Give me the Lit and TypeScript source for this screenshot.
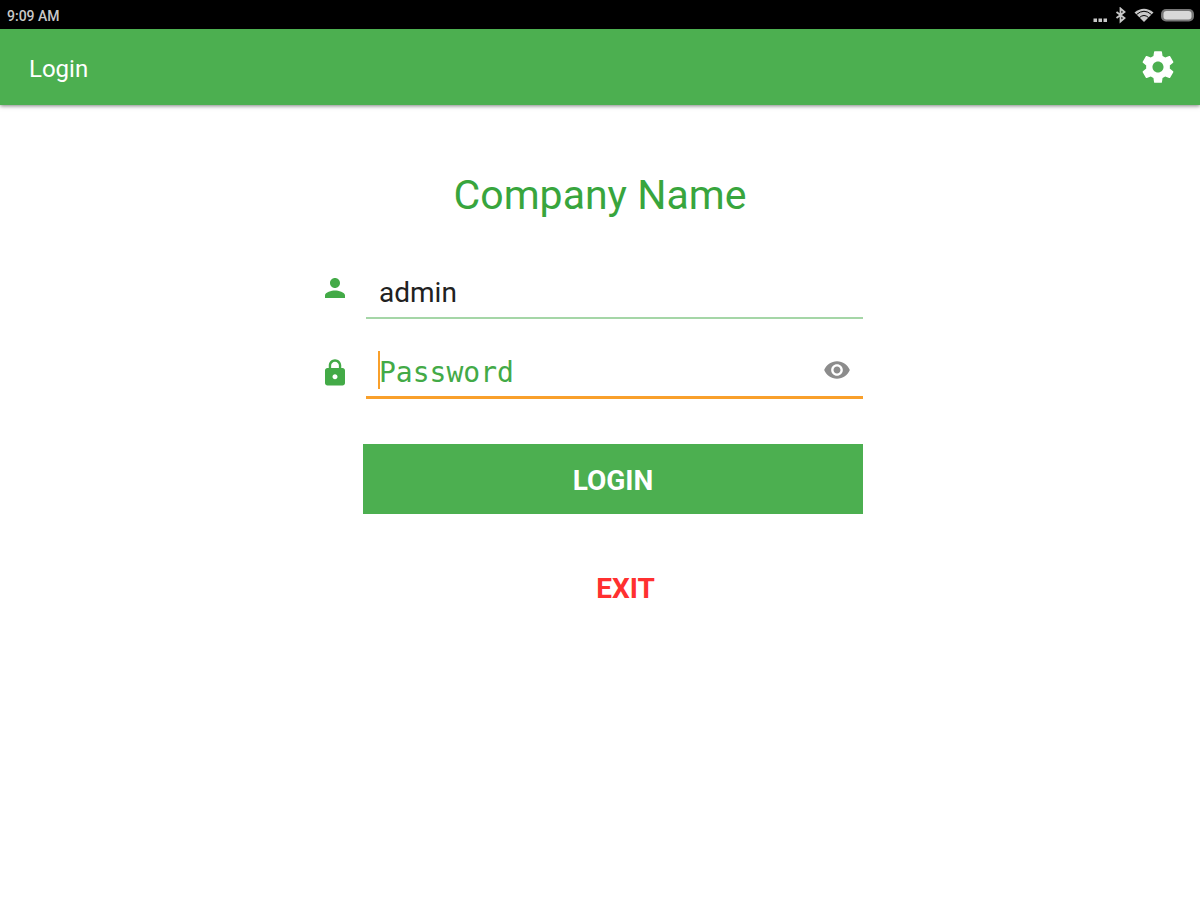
import { LitElement, html, css, svg } from "lit";
import { customElement, state } from "lit/decorators.js";

const icons = {
  gear: svg`<path d="M19.43 12.98c.04-.32.07-.64.07-.98s-.03-.66-.07-.98l2.11-1.65c.19-.15.24-.42.12-.64l-2-3.46c-.12-.22-.39-.3-.61-.22l-2.49 1c-.52-.4-1.08-.73-1.69-.98l-.38-2.65C14.46 2.18 14.25 2 14 2h-4c-.25 0-.46.18-.49.42l-.38 2.65c-.61.25-1.17.59-1.69.98l-2.49-1c-.23-.09-.49 0-.61.22l-2 3.46c-.13.22-.07.49.12.64l2.11 1.65c-.04.32-.07.65-.07.98s.03.66.07.98l-2.11 1.65c-.19.15-.24.42-.12.64l2 3.46c.12.22.39.3.61.22l2.49-1c.52.4 1.08.73 1.69.98l.38 2.65c.03.24.24.42.49.42h4c.25 0 .46-.18.49-.42l.38-2.65c.61-.25 1.17-.59 1.69-.98l2.49 1c.23.09.49 0 .61-.22l2-3.46c.12-.22.07-.49-.12-.64l-2.11-1.65zM12 15.5c-1.93 0-3.5-1.57-3.5-3.5s1.57-3.5 3.5-3.5 3.5 1.57 3.5 3.5-1.57 3.5-3.5 3.5z"/>`,
  person: svg`<path d="M12 12c2.21 0 4-1.79 4-4s-1.79-4-4-4-4 1.79-4 4 1.79 4 4 4zm0 2c-2.67 0-8 1.34-8 4v2h16v-2c0-2.66-5.33-4-8-4z"/>`,
  lock: svg`<path d="M18 8h-1V6c0-2.76-2.24-5-5-5S7 3.24 7 6v2H6c-1.1 0-2 .9-2 2v10c0 1.1.9 2 2 2h12c1.1 0 2-.9 2-2V10c0-1.1-.9-2-2-2zm-6 9c-1.1 0-2-.9-2-2s.9-2 2-2 2 .9 2 2-.9 2-2 2zm3.1-9H8.900V6c0-1.710 1.390-3.100 3.100-3.100s3.100 1.390 3.100 3.100v2z"/>`,
  eye: svg`<path d="M12 4.500C7 4.500 2.730 7.610 1 12c1.730 4.390 6 7.500 11 7.500s9.270-3.110 11-7.500c-1.730-4.390-6-7.500-11-7.500zM12 17c-2.760 0-5-2.240-5-5s2.240-5 5-5 5 2.240 5 5-2.240 5-5 5zm0-8c-1.660 0-3 1.340-3 3s1.340 3 3 3 3-1.340 3-3-1.340-3-3-3z"/>`,
};

@customElement("app-root")
export class AppRoot extends LitElement {
  static styles = css`
    :host {
      display: block;
      min-height: 100vh;
      background: #fff;
      font-family: Roboto, sans-serif;
    }
    svg {
      display: block;
      fill: currentColor;
    }
    button {
      padding: 0;
      border: 0;
      background: none;
      font: inherit;
      color: inherit;
      cursor: pointer;
    }
    .status {
      display: flex;
      align-items: center;
      justify-content: space-between;
      height: 29px;
      padding: 2px 6px 0 7px;
      box-sizing: border-box;
      background: #000;
      color: #c8c8c8;
      font-size: 14px;
      font-weight: 500;
    }
    .bar {
      display: flex;
      align-items: center;
      justify-content: space-between;
      height: 76px;
      padding: 0 23px 0 29px;
      background: #4caf50;
      color: #fff;
      box-shadow: 0 1px 4px rgba(0, 0, 0, 0.5);
    }
    .title {
      margin: 0;
      padding-top: 4px;
      font-size: 24px;
      font-weight: 400;
    }
    .gear {
      width: 38px;
      height: 38px;
    }
    .content {
      max-width: 560px;
      margin: 0 auto;
      padding-top: 65px;
    }
    .company {
      margin: 0;
      font-size: 41px;
      line-height: 50px;
      font-weight: 400;
      text-align: center;
      color: #38a53d;
    }
    .form {
      padding: 45px 17px 0 0;
      font-size: 28px;
    }
    .row {
      display: flex;
      gap: 16px;
      height: 54px;
    }
    .row + .row {
      margin-top: 26px;
    }
    .lead {
      flex: none;
      width: 30px;
      height: 30px;
      padding-top: 8px;
      color: #43aa47;
    }
    .lead.low {
      padding-top: 13px;
    }
    .field {
      position: relative;
      display: flex;
      flex: 1;
      align-items: center;
      min-width: 0;
      box-sizing: border-box;
      padding: 2px 12px 0 13px;
      border-bottom: 2px solid #a5d6a7;
    }
    .field.active {
      border-bottom: 3px solid #f9a02b;
      padding-top: 0;
    }
    .input {
      flex: 1;
      min-width: 0;
      padding: 0;
      border: 0;
      outline: 0;
      background: none;
      font: inherit;
      color: #212121;
      caret-color: #f9a02b;
    }
    .input.mono {
      padding-top: 4px;
      font-family: "DejaVu Sans Mono", monospace;
    }
    .input::placeholder {
      color: #43aa47;
      opacity: 1;
    }
    .caret {
      position: absolute;
      left: 12px;
      top: 6px;
      width: 2px;
      height: 38px;
      background: #f9a02b;
    }
    .eye {
      padding-bottom: 2px;
      color: #8c8c8c;
    }
    .actions {
      display: flex;
      flex-direction: column;
      padding: 45px 0 0 43px;
    }
    .login {
      height: 70px;
      padding-top: 3px;
      background: #4caf50;
      color: #fff;
      font-weight: 700;
    }
    .exit {
      margin: 39px 0 0 25px;
      height: 71px;
      color: #ff3030;
      font-weight: 700;
    }
  `;

  @state() private shown = false;
  @state() private idle = true;

  private icon(shape: unknown, size: number) {
    return html`<svg width=${size} height=${size} viewBox="0 0 24 24" aria-hidden="true">${shape}</svg>`;
  }

  render() {
    return html`
      <div class="status">
        <span>9:09 AM</span>
        <svg width="102" height="18" viewBox="0 0 102 18" aria-hidden="true">
          <path d="M1.500 11.500h3.500v3.500h-3.500zM6.500 11.500h3.500v3.500h-3.500zM11.500 11.500h3.500v3.500h-3.500z" />
          <path d="M24.500 5l8 6-4 3.500V1.500l4 3.500-8 6" fill="none" stroke="currentColor" stroke-width="1.800" />
          <path d="M42.500 5.500Q52 -2 61.500 5.500L52 15z" />
          <path d="M44.500 7.500Q52 1 59.500 7.500M47.500 10.500Q52 6.500 56.500 10.500" fill="none" stroke="#000" stroke-width="1" />
          <rect x="69" y="2" width="33" height="12.500" rx="5" fill="#777" />
          <rect x="71.500" y="4" width="28" height="8.500" rx="3" fill="#d8d8d8" />
        </svg>
      </div>
      <header class="bar">
        <h1 class="title">Login</h1>
        <button class="gear" aria-label="Settings">${this.icon(icons.gear, 38)}</button>
      </header>
      <main class="content">
        <h2 class="company">Company Name</h2>
        <form class="form" @submit=${(e: Event) => e.preventDefault()}>
          <div class="row">
            <label class="lead" for="user" aria-label="User name">${this.icon(icons.person, 30)}</label>
            <div class="field"><input class="input" id="user" type="text" value="admin" /></div>
          </div>
          <div class="row">
            <label class="lead low" for="pass" aria-label="Password">${this.icon(icons.lock, 30)}</label>
            <div class="field active">
              ${this.idle ? html`<span class="caret"></span>` : null}
              <input
                class="input mono"
                id="pass"
                type=${this.shown ? "text" : "password"}
                placeholder="Password"
                @focus=${() => (this.idle = false)}
              />
              <button class="eye" type="button" aria-label="Show password" @click=${() => (this.shown = !this.shown)}>
                ${this.icon(icons.eye, 28)}
              </button>
            </div>
          </div>
          <div class="actions">
            <button class="login" type="submit">LOGIN</button>
            <button class="exit" type="button">EXIT</button>
          </div>
        </form>
      </main>
    `;
  }
}
